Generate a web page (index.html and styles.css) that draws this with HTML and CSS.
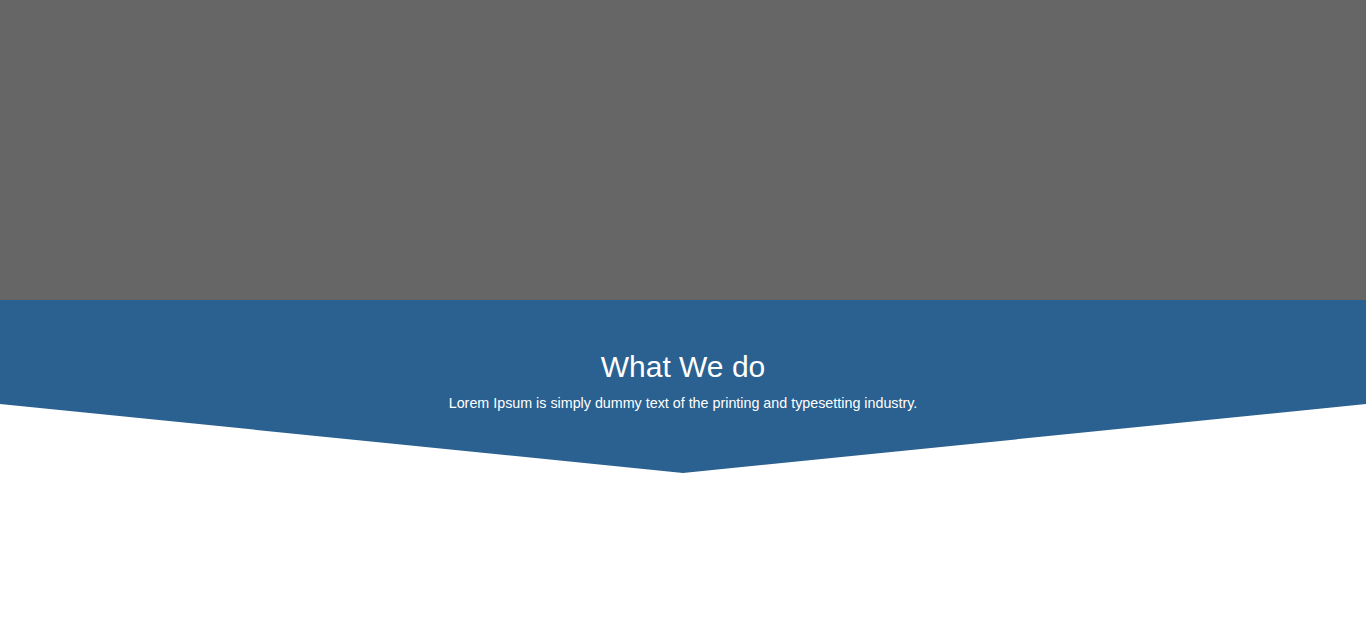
FILE: index.html
```html
<!DOCTYPE html>
<html lang="en">
<head>
<meta charset="utf-8">
<title>What We do</title>
<link rel="stylesheet" href="styles.css">
</head>
<body>
<header class="hero"></header>
<section class="what">
  <h2 class="what-title">What We do</h2>
  <p class="what-text">Lorem Ipsum is simply dummy text of the printing and typesetting industry.</p>
</section>
<main class="rest"></main>
</body>
</html>
```
FILE: styles.css
```css
html, body {
  margin: 0;
  padding: 0;
  background: #ffffff;
  font-family: "Liberation Sans", Arial, Helvetica, sans-serif;
  font-size: 14px;
  line-height: 1.42857;
  color: #ffffff;
}

.hero {
  height: 300px;
  background: #666666;
}

.what {
  box-sizing: border-box;
  height: 173px;
  padding-top: 50px;
  background: #2a6190;
  text-align: center;
  clip-path: polygon(0 0, 100% 0, 100% 104px, 50% 100%, 0 104px);
}

.what-title {
  margin: 0 0 10px;
  font-size: 30px;
  font-weight: 400;
  line-height: 1.1;
}

.what-text {
  margin: 0;
  font-size: 14.3px;
  line-height: 20px;
}

.rest {
  height: 170px;
}
```
